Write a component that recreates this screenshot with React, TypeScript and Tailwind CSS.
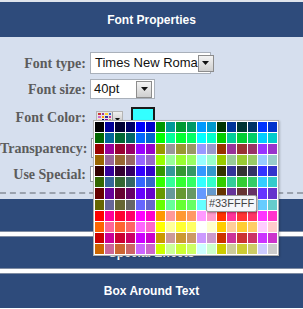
import React from "react";

const ORDER = ["00", "99", "33", "66", "FF", "CC"];

function paletteColors(): string[] {
  const out: string[] = [];
  for (let r = 0; r < 12; r++) {
    const red = ORDER[Math.floor(r / 2)];
    const p = r % 2;
    for (let c = 0; c < 18; c++) {
      const green = ORDER[p * 3 + Math.floor(c / 6)];
      const blue = ORDER[c % 6];
      out.push("#" + red + green + blue);
    }
  }
  return out;
}

function DropBtn() {
  return (
    <div className="flex h-[17px] w-[16px] shrink-0 items-center justify-center border border-[#8d8d8d] bg-gradient-to-b from-[#f4f4f4] to-[#cfcfcf]">
      <svg width="7" height="4" viewBox="0 0 7 4">
        <path d="M0 0h7L3.5 4z" fill="#111" />
      </svg>
    </div>
  );
}

const labelCls =
  "w-[86px] shrink-0 text-right whitespace-nowrap text-[14px] font-bold text-[#5c5c5c] [font-family:'Liberation_Serif',serif]";

export default function App() {
  const colors = paletteColors();
  const mini = ["#c33", "#939", "#fc3", "#36c", "#c6c", "#f90", "#339", "#c39", "#fc9", "#006", "#909", "#c96"];
  return (
    <div className="relative h-[309px] w-[303px] overflow-hidden bg-white [font-family:'Liberation_Sans',Arial,sans-serif]">
      <div className="h-[2px] bg-[#dfe4ec]" />
      <div className="flex h-[35px] items-center justify-center bg-[#2e4b7b] text-[12px] font-bold text-white">
        Font Properties
      </div>
      <div className="flex h-[162px] flex-col bg-[#d6dfee] pt-[15px]">
        <div className="flex h-[22px] items-center gap-[4px]">
          <div className={labelCls}>Font type:</div>
          <div className="flex h-[22px] w-[121px] items-center justify-between border border-[#a9b0ba] bg-white pl-[4px] pr-[1px] text-[13px] text-[#111]">
            <span className="whitespace-nowrap">Times New Roma</span>
            <DropBtn />
          </div>
        </div>
        <div className="mt-[5px] flex h-[20px] items-center gap-[4px]">
          <div className={labelCls}>Font size:</div>
          <div className="flex h-[20px] w-[65px] items-center justify-between border border-[#a9b0ba] bg-white pl-[3px] pr-[2px] text-[13px] text-[#111]">
            <span>40pt</span>
            <DropBtn />
          </div>
        </div>
        <div className="mt-[5px] flex h-[26px] items-center gap-[4px]">
          <div className={labelCls}>Font Color:</div>
          <div className="ml-[6px] flex h-[12px] items-stretch border border-[#b5b5b5] bg-[#e4e4e4]">
            <div className="grid w-[15px] grid-cols-4 gap-px p-px">
              {mini.map((c, i) => (
                <div key={i} style={{ backgroundColor: c }} />
              ))}
            </div>
            <div className="flex w-[10px] items-end justify-center border-l border-[#9a9a9a] bg-gradient-to-b from-[#f0f0f0] to-[#c8c8c8] pb-px">
              <svg width="5" height="3" viewBox="0 0 5 3">
                <path d="M0 0h5L2.5 3z" fill="#111" />
              </svg>
            </div>
          </div>
          <div className="ml-[4px] h-[20px] w-[24px] border-2 border-[#1a1a1a] bg-[#33ffff]" />
        </div>
        <div className="mt-[5px] flex h-[26px] items-center gap-[4px]">
          <div className={labelCls}>Transparency:</div>
          <div className="ml-[1px] h-[20px] w-[60px] border border-[#8e96a2] bg-white" />
        </div>
        <div className="flex h-[26px] items-center gap-[4px]">
          <div className={labelCls}>Use Special:</div>
          <div className="h-[16px] w-[40px] border border-[#8e96a2] bg-white" />
        </div>
        <div className="mt-auto mb-[5px] border-t-2 border-dashed border-[#9aa2ae]" />
      </div>
      <div className="flex h-[33px] items-center justify-center border-b border-[#7f8ca2] bg-[#2e4b7b] text-[12px] font-bold text-white">
        Text Effects
      </div>
      <div className="h-[4px] bg-white" />
      <div className="flex h-[33px] items-center justify-center border-y border-[#7f8ca2] bg-[#2e4b7b] text-[12px] font-bold text-white">
        Special Effects
      </div>
      <div className="h-[4px] bg-white" />
      <div className="flex h-[35px] items-center justify-center border-t border-[#7f8ca2] bg-[#2e4b7b] text-[12px] font-bold text-white">
        Box Around Text
      </div>

      <div className="absolute left-[93px] top-[120px] grid h-[136px] w-[186px] grid-cols-[repeat(18,1fr)] grid-rows-[repeat(12,1fr)] gap-px border border-[#b0b0b0] bg-white p-px shadow-[1px_1px_2px_rgba(0,0,0,0.2)]">
        {colors.map((c, i) => (
          <div key={i} style={{ backgroundColor: c }} />
        ))}
      </div>

      <div className="absolute left-[206px] top-[195px] flex h-[17px] w-[51px] items-center justify-center rounded-[2px] border border-[#9a9a9a] bg-[#f5f6fa] text-[11px] text-[#444] shadow-[1px_1px_2px_rgba(0,0,0,0.3)]">
        #33FFFF
      </div>
    </div>
  );
}
